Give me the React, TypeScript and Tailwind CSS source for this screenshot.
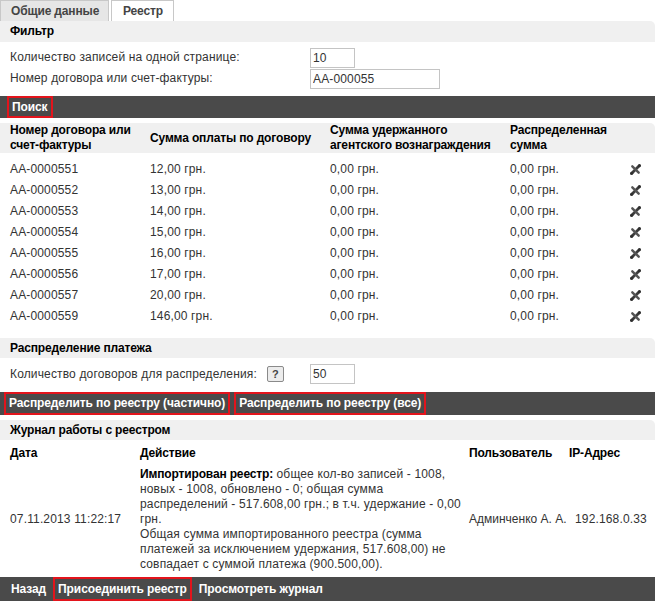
import React from 'react';

const rows = [
  { id: 'АА-0000551', sum: '12,00 грн.' },
  { id: 'АА-0000552', sum: '13,00 грн.' },
  { id: 'АА-0000553', sum: '14,00 грн.' },
  { id: 'АА-0000554', sum: '15,00 грн.' },
  { id: 'АА-0000555', sum: '16,00 грн.' },
  { id: 'АА-0000556', sum: '17,00 грн.' },
  { id: 'АА-0000557', sum: '20,00 грн.' },
  { id: 'АА-0000559', sum: '146,00 грн.' },
];

function DeleteIcon() {
  return (
    <svg width="11" height="11" viewBox="0 0 11 11">
      <path d="M9.5 1.5 L1.5 9.5" stroke="#3d3d3d" strokeWidth="2.8" strokeLinecap="round" />
      <path d="M2.3 2.3 L8.7 8.7" stroke="#555" strokeWidth="2.4" strokeLinecap="round" />
      <circle cx="9.3" cy="1.7" r="1.5" fill="#2f2f2f" />
      <circle cx="1.7" cy="9.3" r="1.5" fill="#2f2f2f" />
    </svg>
  );
}

function SectionHeader({ title, h = 'h-[20px]' }: { title: string; h?: string }) {
  return (
    <div className={`${h} bg-[#f0f0f0] rounded-tr-[5px] flex items-center px-[10px] font-bold tracking-[-0.15px] text-black`}>
      {title}
    </div>
  );
}

function BarButton({ label, active }: { label: string; active?: boolean }) {
  return (
    <button
      className={`h-full px-[3px] flex items-center font-bold tracking-[-0.1px] text-white border-2 ${active ? 'border-[#e3141c]' : 'border-transparent'}`}
    >
      {label}
    </button>
  );
}

export default function App() {
  return (
    <div className="w-[655px] bg-white text-[12px] leading-[15px] tracking-[0.15px] text-[#333]" style={{ fontFamily: '"Liberation Sans", Arial, sans-serif' }}>
      {/* tabs */}
      <div className="h-[21px] flex items-end gap-[2px]">
        <div className="h-[21px] w-[109px] bg-[#e6e6e6] border border-b-0 border-[#c8c8c8] flex items-center pl-[10px] font-bold tracking-[-0.15px] text-[#444]">
          Общие данные
        </div>
        <div className="h-[21px] w-[63px] bg-white border border-b-0 border-[#c8c8c8] flex items-center pl-[11px] font-bold tracking-[-0.15px] text-[#444]">
          Реестр
        </div>
      </div>

      <SectionHeader title="Фильтр" h="h-[21px]" />
      <div className="pt-[5px] pb-[7px] px-[10px]">
        <div className="h-[21px] flex items-center">
          <span className="w-[300px]">Количество записей на одной странице:</span>
          <input className="h-[20px] w-[45px] border border-[#c4c4c4] px-[2px] text-[#333] outline-none" defaultValue="10" />
        </div>
        <div className="h-[21px] flex items-center">
          <span className="w-[300px]">Номер договора или счет-фактуры:</span>
          <input className="h-[20px] w-[130px] border border-[#c4c4c4] px-[2px] text-[#333] outline-none" defaultValue="АА-000055" />
        </div>
      </div>

      <div className="h-[22px] bg-[#4a4a4a] flex pl-[7px]">
        <BarButton label="Поиск" active />
      </div>

      {/* contracts table */}
      <div className="mt-[5px] h-[30px] bg-[#f0f0f0] rounded-tr-[5px] grid grid-cols-[140px_180px_180px_1fr] items-center pl-[10px] font-bold tracking-[-0.15px] text-black">
        <div>Номер договора или<br />счет-фактуры</div>
        <div>Сумма оплаты по договору</div>
        <div>Сумма удержанного<br />агентского вознаграждения</div>
        <div>Распределенная<br />сумма</div>
      </div>
      <div className="mt-[6px] mb-[11px]">
        {rows.map((r) => (
          <div key={r.id} className="h-[21px] grid grid-cols-[140px_180px_180px_1fr_25px] items-center pl-[10px]">
            <div>{r.id}</div>
            <div>{r.sum}</div>
            <div>0,00 грн.</div>
            <div>0,00 грн.</div>
            <div className="flex items-center">
              <DeleteIcon />
            </div>
          </div>
        ))}
      </div>

      <SectionHeader title="Распределение платежа" />
      <div className="mt-[6px] mb-[8px] h-[20px] flex items-center px-[10px]">
        <div className="w-[300px] flex items-center">
          <span>Количество договоров для распределения:</span>
          <span className="ml-[10px] h-[16px] w-[17px] border border-[#8a8a8a] bg-[#ececec] rounded-[2px] flex items-center justify-center text-[11px] font-bold text-[#444]">
            ?
          </span>
        </div>
        <input className="h-[20px] w-[45px] border border-[#c4c4c4] px-[2px] text-[#333] outline-none" defaultValue="50" />
      </div>

      <div className="h-[23px] bg-[#4a4a4a] flex gap-[4px] pl-[4px]">
        <BarButton label="Распределить по реестру (частично)" active />
        <BarButton label="Распределить по реестру (все)" active />
      </div>

      <div className="mt-[5px]">
        <SectionHeader title="Журнал работы с реестром" />
      </div>
      <div className="mt-[5px] h-[17px] grid grid-cols-[130px_329px_100px_1fr] items-center pl-[10px] font-bold tracking-[-0.15px] text-black">
        <div>Дата</div>
        <div>Действие</div>
        <div>Пользователь</div>
        <div>IP-Адрес</div>
      </div>
      <div className="mt-[5px] mb-[5px] grid grid-cols-[130px_329px_100px_1fr] items-center pl-[10px]">
        <div>07.11.2013 11:22:17</div>
        <div>
          <b className="text-black tracking-[-0.15px]">Импортирован реестр:</b> общее кол-во записей - 1008,<br />
          новых - 1008, обновлено - 0; общая сумма<br />
          распределений - 517.608,00 грн.; в т.ч. удержание - 0,00<br />
          грн.<br />
          Общая сумма импортированного реестра (сумма<br />
          платежей за исключением удержания, 517.608,00) не<br />
          совпадает с суммой платежа (900.500,00).
        </div>
        <div className="whitespace-nowrap tracking-normal">Админченко А. А.</div>
        <div className="pl-[6px]">192.168.0.33</div>
      </div>

      <div className="h-[24px] bg-[#4a4a4a] flex gap-[2px] pl-[6px]">
        <BarButton label="Назад" />
        <BarButton label="Присоединить реестр" active />
        <BarButton label="Просмотреть журнал" />
      </div>
    </div>
  );
}
